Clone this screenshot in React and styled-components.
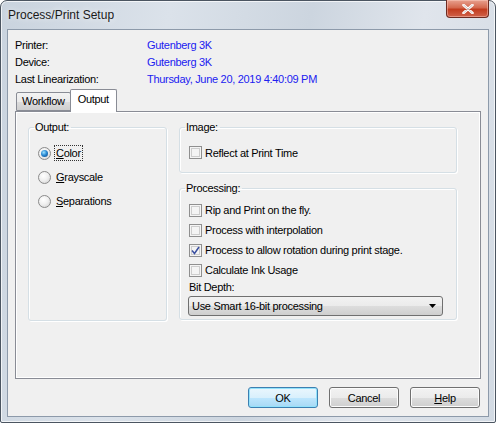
import React from "react";
import styled, { createGlobalStyle } from "styled-components";

const GlobalStyle = createGlobalStyle`
  html, body {
    margin: 0;
    padding: 0;
    background: #ffffff;
  }
  body {
    font-family: "Liberation Sans", Arial, sans-serif;
    font-size: 11px;
    letter-spacing: -0.3px;
    color: #000;
  }
`;

const Window = styled.div`
  box-sizing: border-box;
  width: 496px;
  height: 423px;
  border: 1px solid #4b5561;
  border-radius: 7px 7px 2px 2px;
  background: linear-gradient(100deg, #c9d3de 0%, #dbe2ea 30%, #ccd5df 55%, #e0e5ec 75%, #d2dae3 100%);
  padding: 0 6px 5px 6px;
  display: flex;
  flex-direction: column;
  box-shadow: inset 0 0 0 1px rgba(255, 255, 255, 0.7);
`;

const TitleBar = styled.div`
  height: 28px;
  display: flex;
  align-items: flex-start;
  justify-content: space-between;
`;

const Title = styled.span`
  font-size: 12px;
  letter-spacing: 0;
  color: #1a1a1a;
  margin: 7px 0 0 1px;
  text-shadow: 0 0 6px rgba(255, 255, 255, 0.9);
`;

const CloseButton = styled.div`
  width: 43px;
  height: 18px;
  margin-top: -1px;
  box-sizing: border-box;
  border: 1px solid #6d2b21;
  border-top: none;
  border-radius: 0 0 4px 4px;
  background: linear-gradient(#e8a18f 0%, #d4694f 45%, #c23c1f 55%, #d0624a 100%);
  display: flex;
  align-items: center;
  justify-content: center;
  box-shadow: inset 0 0 0 1px rgba(255, 210, 200, 0.45);
`;

const Client = styled.div`
  flex: 1;
  border: 1px solid #8d9aaa;
  background: #f0f0f0;
  padding: 6px 7px 0 7px;
  display: flex;
  flex-direction: column;
`;

const InfoGrid = styled.div`
  display: grid;
  grid-template-columns: 132px 1fr;
  grid-auto-rows: 17px;
  align-items: center;
`;

const Value = styled.span`
  color: #2020f0;
`;

const TabStrip = styled.div`
  display: flex;
  align-items: flex-end;
  height: 22px;
  margin-top: 2px;
  padding-left: 1px;
  position: relative;
  z-index: 1;
`;

const Tab = styled.div`
  box-sizing: border-box;
  height: ${(p) => (p.$active ? "23px" : "19px")};
  margin-bottom: ${(p) => (p.$active ? "-1px" : "0")};
  margin-left: ${(p) => (p.$active ? "-1px" : "0")};
  padding: ${(p) => (p.$active ? "3px 7px 0 7px" : "2px 5px 0 5px")};
  border: 1px solid #898c95;
  border-bottom: ${(p) => (p.$active ? "none" : "1px solid #898c95")};
  border-radius: 2px 2px 0 0;
  background: ${(p) =>
    p.$active ? "#ffffff" : "linear-gradient(#f3f3f3 0%, #ebebeb 50%, #dddddd 51%, #cfcfcf 100%)"};
`;

const Panel = styled.div`
  box-sizing: border-box;
  height: 268px;
  border: 1px solid #898c95;
  background: #f0f0f0;
  box-shadow: inset 1px 1px 0 #ffffff, inset -1px -1px 0 #ffffff;
  padding: 9px 23px 0 12px;
  display: grid;
  grid-template-columns: 139px 1fr;
  column-gap: 12px;
  align-items: start;
`;

const Group = styled.fieldset`
  box-sizing: border-box;
  margin: 0;
  min-width: 0;
  border: 1px solid #d5dfe5;
  border-radius: 3px;
  box-shadow: inset 1px 1px 0 #ffffff, 1px 1px 0 #ffffff;
  padding: ${(p) => p.$pad};
  height: ${(p) => p.$height || "auto"};
`;

const Legend = styled.legend`
  padding: 0 2px 0 1px;
  margin-left: -4px;
  line-height: 13px;
  font-size: 11px;
`;

const RightColumn = styled.div`
  display: flex;
  flex-direction: column;
  gap: 9px;
`;

const OptionRow = styled.div`
  display: flex;
  align-items: center;
  height: ${(p) => p.$h}px;
`;

const Radio = styled.span`
  box-sizing: border-box;
  width: 13px;
  height: 13px;
  border-radius: 50%;
  border: 1px solid #8a8a8a;
  background: radial-gradient(circle at 40% 35%, #ffffff 0%, #f0f0f0 45%, #cfcfcf 100%);
  display: flex;
  align-items: center;
  justify-content: center;
  margin-right: 3px;

  &::after {
    content: "";
    display: ${(p) => (p.$checked ? "block" : "none")};
    width: 7px;
    height: 7px;
    border-radius: 50%;
    background: radial-gradient(circle at 40% 35%, #9fe4ff 0%, #2a8ad4 45%, #0c3f7a 100%);
  }
`;

const Box = styled.span`
  box-sizing: border-box;
  width: 13px;
  height: 13px;
  border: 1px solid #8f8f8f;
  background: #f4f4f4;
  box-shadow: inset 0 0 0 1px #f4f4f4, inset 0 0 0 2px #cdcdcd;
  display: flex;
  align-items: center;
  justify-content: center;
  margin-right: 3px;
  flex: none;
`;

const OptionText = styled.span`
  padding: 1px 1px;
  border: 1px dotted ${(p) => (p.$focus ? "#333" : "transparent")};
`;

const Key = styled.u`
  text-underline-offset: 1px;
`;

const DepthLabel = styled.div`
  line-height: 13px;
  margin-top: 1px;
`;

const Select = styled.div`
  box-sizing: border-box;
  height: 20px;
  margin: 2px 0 0 -1px;
  border: 1px solid #707070;
  border-radius: 3px;
  background: linear-gradient(#f2f2f2 0%, #ebebeb 50%, #dddddd 51%, #cfcfcf 100%);
  display: flex;
  align-items: center;
  justify-content: space-between;
  padding: 0 6px 0 3px;
`;

const Footer = styled.div`
  display: flex;
  justify-content: flex-end;
  gap: 11px;
  padding: 8px 1px 0 0;
`;

const Button = styled.div`
  box-sizing: border-box;
  width: 70px;
  height: 21px;
  border-radius: 3px;
  border: 1px solid ${(p) => (p.$default ? "#3c7fb1" : "#707070")};
  background: ${(p) =>
    p.$default
      ? "linear-gradient(#eaf6fd 0%, #d9f0fc 50%, #bee6fd 51%, #a7d9f5 100%)"
      : "linear-gradient(#f2f2f2 0%, #ebebeb 50%, #dddddd 51%, #cfcfcf 100%)"};
  box-shadow: inset 0 0 0 1px ${(p) => (p.$default ? "#92e2fb" : "#fcfcfc")};
  display: flex;
  align-items: center;
  justify-content: center;
`;

const CheckMark = () => (
  <svg width="9" height="9" viewBox="0 0 9 9">
    <path d="M1 4.5 L3.5 7.5 L8 1" fill="none" stroke="#3a4fa0" strokeWidth="1.5" />
  </svg>
);

const CheckOption = ({ label, checked }) => (
  <OptionRow $h={20}>
    <Box>{checked && <CheckMark />}</Box>
    <span>{label}</span>
  </OptionRow>
);

const RadioOption = ({ accel, rest, checked }) => (
  <OptionRow $h={24}>
    <Radio $checked={checked} />
    <OptionText $focus={checked}>
      <Key>{accel}</Key>
      {rest}
    </OptionText>
  </OptionRow>
);

export default function App() {
  return (
    <>
      <GlobalStyle />
      <Window>
        <TitleBar>
          <Title>Process/Print Setup</Title>
          <CloseButton>
            <svg width="12" height="10" viewBox="0 0 12 10">
              <path
                d="M1.5 1 L10.5 9 M10.5 1 L1.5 9"
                stroke="#ffffff"
                strokeWidth="2.6"
                strokeLinecap="round"
              />
              <path d="M1.5 1 L10.5 9 M10.5 1 L1.5 9" stroke="#5a2a22" strokeWidth="0.6" opacity="0.5" />
            </svg>
          </CloseButton>
        </TitleBar>
        <Client>
          <InfoGrid>
            <span>Printer:</span>
            <Value>Gutenberg 3K</Value>
            <span>Device:</span>
            <Value>Gutenberg 3K</Value>
            <span>Last Linearization:</span>
            <Value>Thursday, June 20, 2019 4:40:09 PM</Value>
          </InfoGrid>
          <TabStrip>
            <Tab>Workflow</Tab>
            <Tab $active>Output</Tab>
          </TabStrip>
          <Panel>
            <Group $pad="7px 0 0 9px" $height="200px">
              <Legend>Output:</Legend>
              <RadioOption accel="C" rest="olor" checked />
              <RadioOption accel="G" rest="rayscale" />
              <RadioOption accel="S" rest="eparations" />
            </Group>
            <RightColumn>
              <Group $pad="10px 0 11px 9px">
                <Legend>Image:</Legend>
                <OptionRow $h={17}>
                  <Box />
                  <span>Reflect at Print Time</span>
                </OptionRow>
              </Group>
              <Group $pad="5px 13px 3px 9px">
                <Legend>Processing:</Legend>
                <CheckOption label="Rip and Print on the fly." />
                <CheckOption label="Process with interpolation" />
                <CheckOption label="Process to allow rotation during print stage." checked />
                <CheckOption label="Calculate Ink Usage" />
                <DepthLabel>Bit Depth:</DepthLabel>
                <Select>
                  <span>Use Smart 16-bit processing</span>
                  <svg width="7" height="4" viewBox="0 0 7 4">
                    <path d="M0 0 H7 L3.5 4 Z" fill="#000" />
                  </svg>
                </Select>
              </Group>
            </RightColumn>
          </Panel>
          <Footer>
            <Button $default>OK</Button>
            <Button>Cancel</Button>
            <Button>
              <span>
                <Key>H</Key>elp
              </span>
            </Button>
          </Footer>
        </Client>
      </Window>
    </>
  );
}
